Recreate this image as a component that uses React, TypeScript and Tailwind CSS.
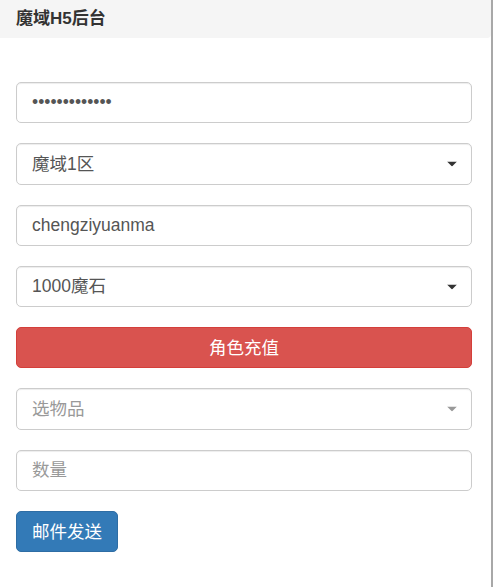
import React from 'react';

const font = { fontFamily: '"Liberation Sans", "Noto Sans CJK SC", sans-serif' };

const Caret: React.FC<{ muted?: boolean }> = ({ muted }) => (
  <svg
    width="10"
    height="5"
    viewBox="0 0 10 5"
    className="pointer-events-none absolute right-[15px] top-1/2 -translate-y-1/2"
  >
    <polygon points="0,0 10,0 5,5" fill={muted ? '#999999' : '#333333'} />
  </svg>
);

const fieldCls =
  'block w-full h-[41.3px] rounded-[5px] border border-[#cccccc] bg-white px-[15px] text-[17.5px] text-[#555555] shadow-[inset_0_1px_1px_rgba(0,0,0,0.075)] outline-none placeholder:text-[#999999]';

const SelectBox: React.FC<{ value: string; muted?: boolean }> = ({ value, muted }) => (
  <div className="relative">
    <div
      className={`flex items-center ${fieldCls} ${muted ? 'text-[#999999]' : 'text-[#333333]'}`}
    >
      {value}
    </div>
    <Caret muted={muted} />
  </div>
);

export default function App() {
  return (
    <div className="flex min-h-[587px] w-[495px] bg-white" style={font}>
      <div className="w-[491px]">
        {/* Header */}
        <div className="flex h-[38px] items-center rounded-br-[4px] bg-[#f5f5f5] px-[16px]">
          <span className="text-[17px] font-bold text-[#333333]">魔域H5后台</span>
        </div>

        {/* Form */}
        <div className="flex flex-col gap-[20px] pl-[16px] pr-[19px] pt-[44px]">
          <input
            type="password"
            readOnly
            defaultValue="1234567890123"
            className={`${fieldCls} text-[15px] text-[#444444]`}
          />
          <SelectBox value="魔域1区" />
          <input type="text" readOnly defaultValue="chengziyuanma" className={fieldCls} />
          <SelectBox value="1000魔石" />
          <button className="h-[41.3px] w-full rounded-[5px] border border-[#d43f3a] bg-[#d9534f] text-[17.5px] text-white">
            角色充值
          </button>
          <SelectBox value="选物品" muted />
          <input type="text" readOnly placeholder="数量" className={fieldCls} />
          <div>
            <button className="h-[41.3px] rounded-[5px] border border-[#2e6da4] bg-[#337ab7] px-[15px] text-[17.5px] text-white">
              邮件发送
            </button>
          </div>
        </div>
      </div>
      <div className="w-[2px] bg-[#a8a8a8]" />
      <div className="flex-1 bg-white" />
    </div>
  );
}
